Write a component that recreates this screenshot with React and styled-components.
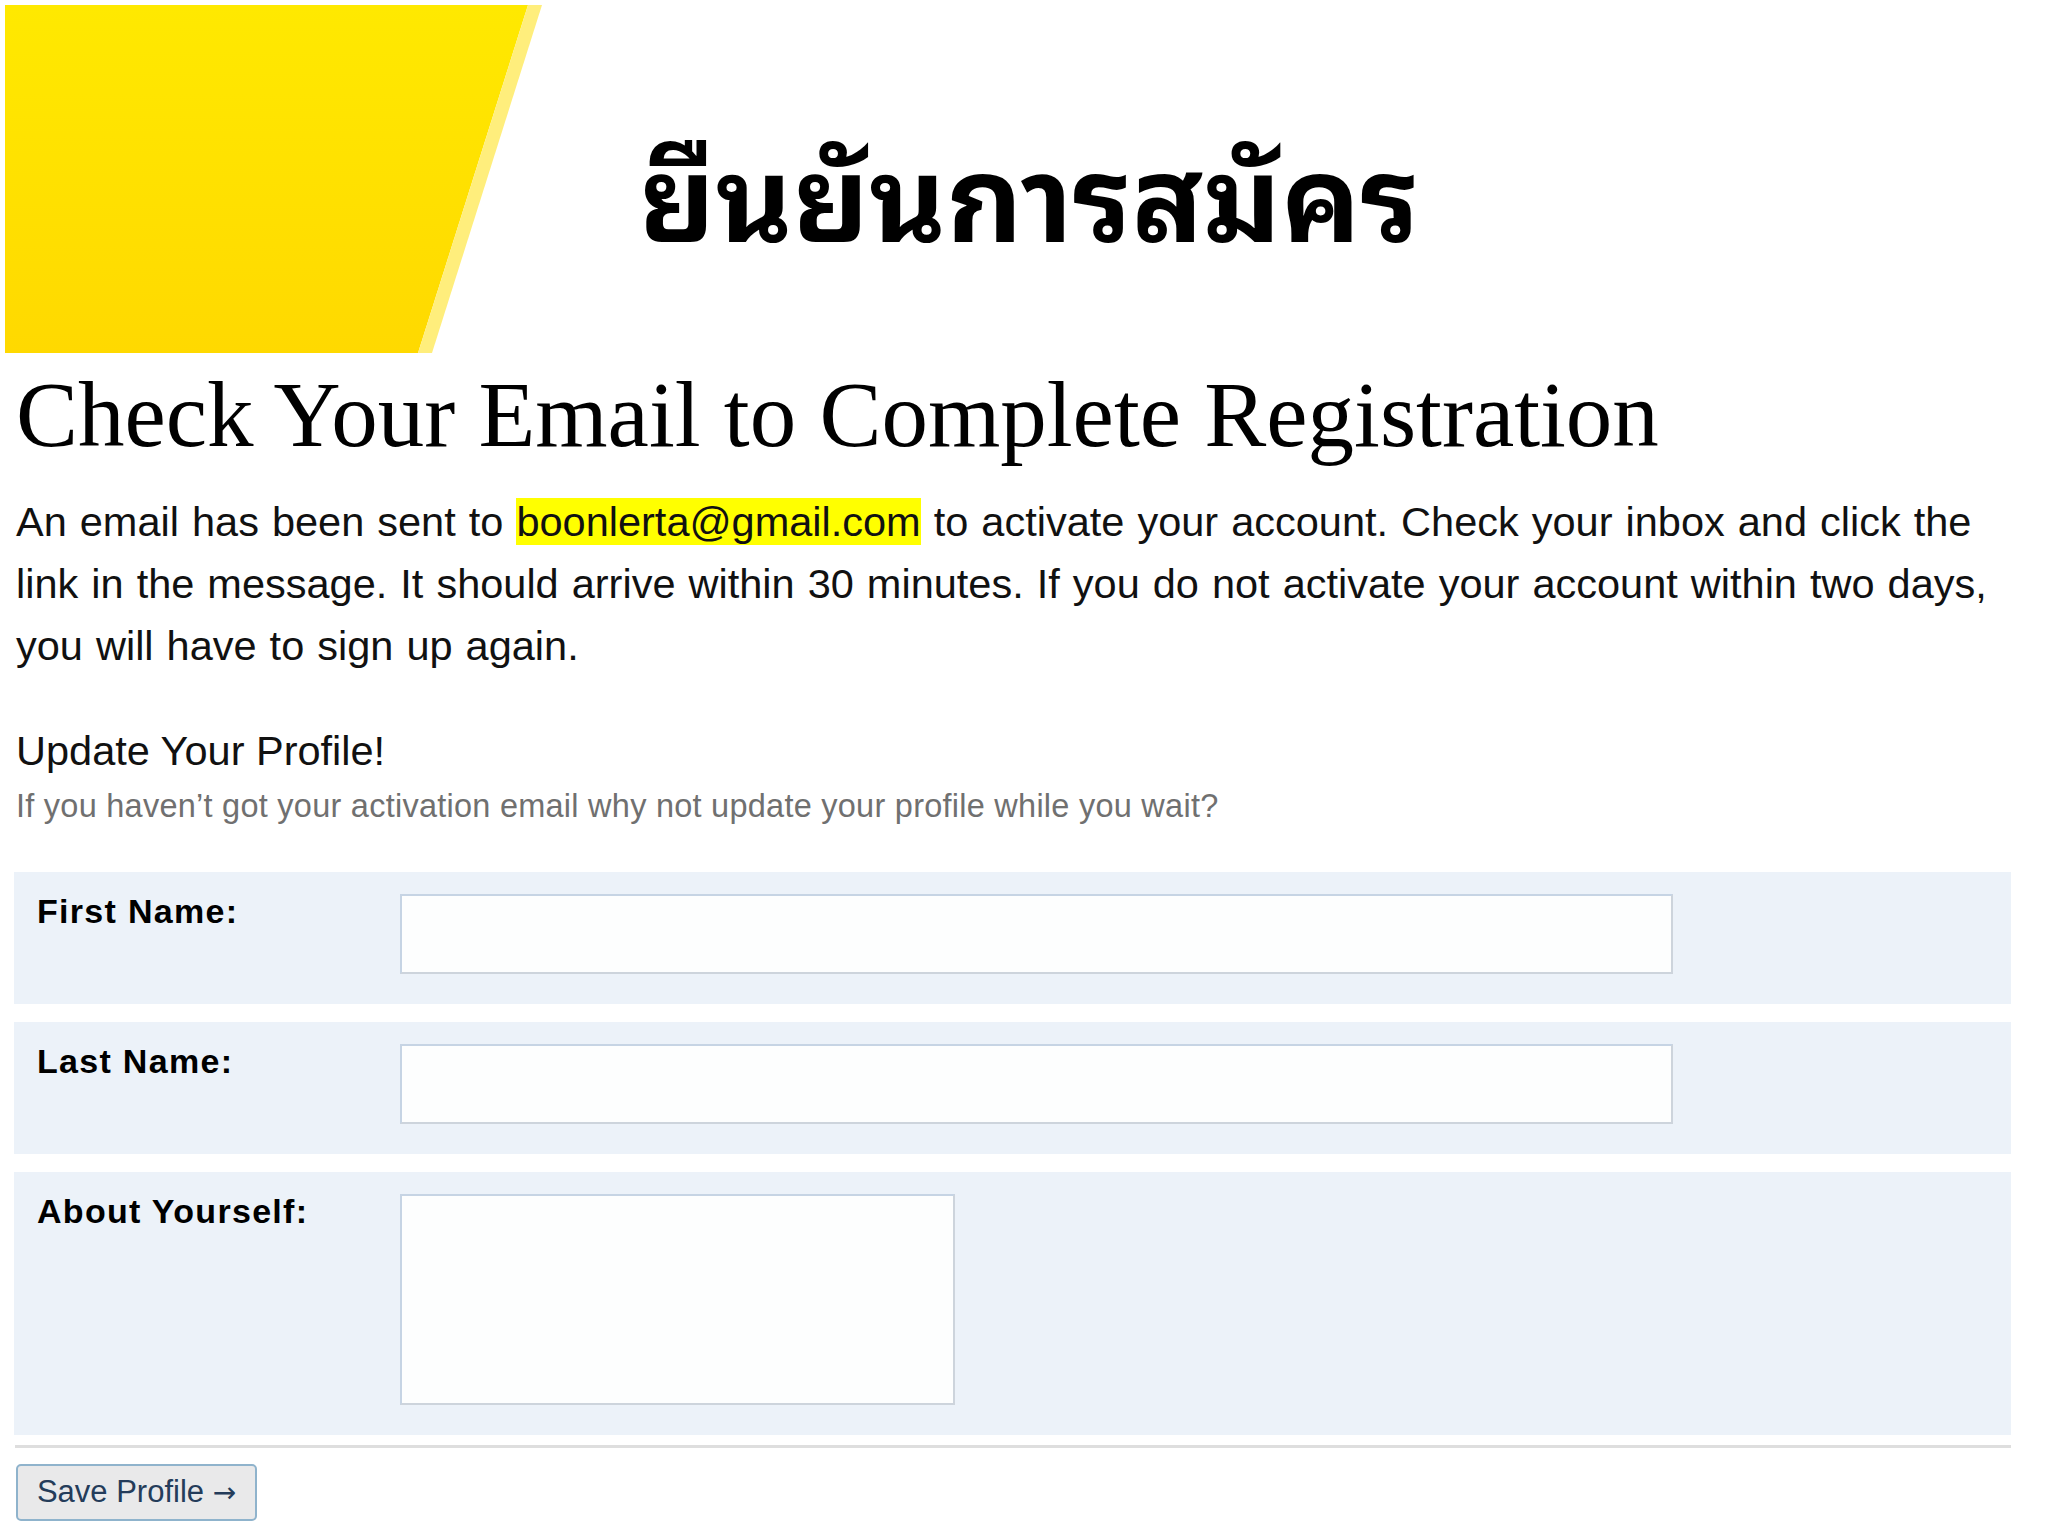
import React from "react";
import styled, { createGlobalStyle } from "styled-components";

const GlobalStyle = createGlobalStyle`
  html, body {
    margin: 0;
    padding: 0;
    background: #ffffff;
  }
  body {
    font-family: "Liberation Sans", Arial, sans-serif;
    color: #111;
  }
`;

const Slide = styled.div`
  width: 2048px;
  height: 1536px;
  overflow: hidden;
  background: #ffffff;
`;

const Header = styled.header`
  display: flex;
  align-items: flex-start;
  height: 353px;
`;

const Banner = styled.svg`
  flex: none;
  display: block;
`;

const ThaiTitle = styled.h1`
  margin: 130px 0 0 94px;
  font-family: "Noto Sans Thai Looped", "Loma", "Garuda", "Tahoma", "Noto Sans Thai", "DejaVu Sans", sans-serif;
  font-weight: 700;
  font-size: 118px;
  line-height: 1;
  color: #000;
  white-space: nowrap;
`;

const Content = styled.main`
  margin-left: 14px;
  width: 1997px;
`;

const Heading = styled.h2`
  margin: 11px 0 0 2px;
  font-family: "Liberation Serif", "Times New Roman", serif;
  font-weight: 400;
  font-size: 93px;
  line-height: 1.1;
  color: #000;
  white-space: nowrap;
`;

const Intro = styled.p`
  margin: 25px 0 0 2px;
  width: 2020px;
  font-size: 41.5px;
  word-spacing: 1.5px;
  line-height: 62px;
  color: #111;
`;

const Highlight = styled.span`
  background: #ffff00;
`;

const SubHeading = styled.h3`
  margin: 50px 0 0 2px;
  font-size: 41.5px;
  font-weight: 400;
  line-height: 1.15;
  color: #111;
`;

const Hint = styled.p`
  margin: 13px 0 0 2px;
  font-size: 32.5px;
  letter-spacing: 0.25px;
  line-height: 1.15;
  color: #707070;
`;

const Form = styled.form`
  margin-top: 47px;
  display: flex;
  flex-direction: column;
  gap: 18px;
`;

const Row = styled.div`
  display: grid;
  grid-template-columns: 363px auto;
  align-items: start;
  padding: 22px 0 30px 23px;
  background: #ecf2f9;
`;

const Label = styled.label`
  margin-top: -2px;
  font-size: 34px;
  font-weight: 700;
  letter-spacing: 1.3px;
  color: #000;
`;

const Field = styled.input`
  box-sizing: border-box;
  width: 1273px;
  height: 80px;
  margin: 0;
  background: #fdfefe;
  border: 2px solid #c6d4e4;
  border-right-color: #cdd4dc;
  border-bottom-color: #cdd4dc;
  outline: none;
`;

const Area = styled.textarea`
  box-sizing: border-box;
  display: block;
  width: 555px;
  height: 211px;
  margin: 0;
  resize: none;
  background: #fdfefe;
  border: 2px solid #c6d4e4;
  border-right-color: #cdd4dc;
  border-bottom-color: #cdd4dc;
  outline: none;
`;

const Divider = styled.hr`
  margin: 10px 0 0 1px;
  border: none;
  height: 3px;
  background: #dedede;
`;

const SaveButton = styled.button`
  margin: 16px 0 0 2px;
  width: 241px;
  height: 57px;
  padding: 0 0 2px;
  box-sizing: border-box;
  font-family: "Liberation Sans", Arial, sans-serif;
  font-size: 31px;
  color: #243c5a;
  background: #e9e9ea;
  border: 2px solid #8fb3cc;
  border-radius: 5px;
  cursor: pointer;
`;

const Arrow = styled.span`
  font-family: "DejaVu Sans", sans-serif;
  font-size: 28px;
`;

const fields = [
  { id: "first", label: "First Name:" },
  { id: "last", label: "Last Name:" },
];

export default function App() {
  return (
    <Slide>
      <GlobalStyle />
      <Header>
        <Banner width="545" height="353" viewBox="0 0 545 353">
          <defs>
            <linearGradient id="bannerFill" x1="0" y1="0" x2="0" y2="1">
              <stop offset="0" stopColor="#ffe900" />
              <stop offset="1" stopColor="#ffd900" />
            </linearGradient>
          </defs>
          <polygon points="5,5 528,5 418,353 5,353" fill="url(#bannerFill)" />
          <polygon points="528,5 542,5 432,353 418,353" fill="#ffee7c" />
        </Banner>
        <ThaiTitle>ยืนยันการสมัคร</ThaiTitle>
      </Header>

      <Content>
        <Heading>Check Your Email to Complete Registration</Heading>
        <Intro>
          An email has been sent to <Highlight>boonlerta@gmail.com</Highlight> to
          activate your account. Check your inbox and click the link in the
          message. It should arrive within 30 minutes. If you do not activate
          your account within two days, you will have to sign up again.
        </Intro>

        <SubHeading>Update Your Profile!</SubHeading>
        <Hint>
          If you haven’t got your activation email why not update your profile
          while you wait?
        </Hint>

        <Form onSubmit={(e) => e.preventDefault()}>
          {fields.map((f) => (
            <Row key={f.id}>
              <Label htmlFor={f.id}>{f.label}</Label>
              <Field id={f.id} type="text" />
            </Row>
          ))}
          <Row>
            <Label htmlFor="about">About Yourself:</Label>
            <Area id="about" />
          </Row>
        </Form>

        <Divider />
        <SaveButton type="button">
          Save Profile <Arrow>→</Arrow>
        </SaveButton>
      </Content>
    </Slide>
  );
}
